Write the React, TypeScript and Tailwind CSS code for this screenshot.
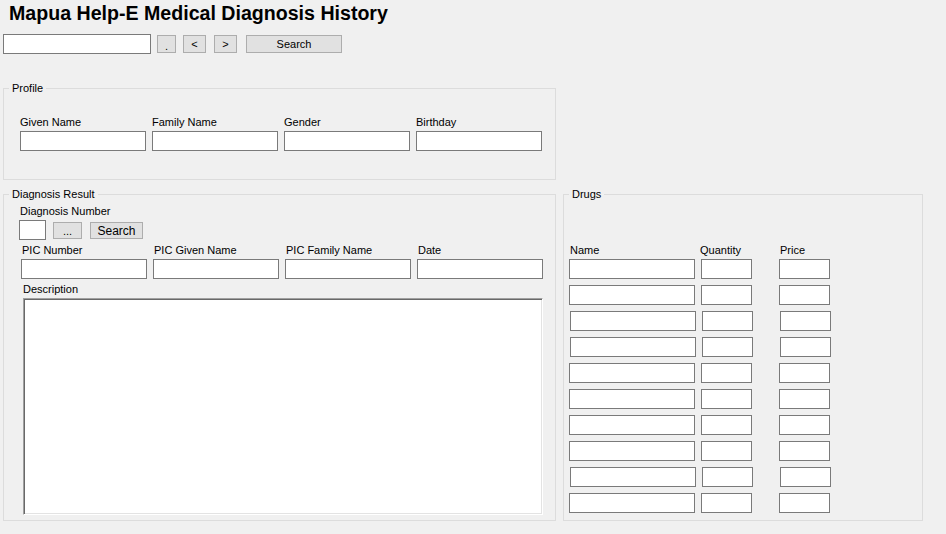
import React from "react";

const Box = ({ className = "" }: { className?: string }) => (
  <input className={`block h-5 border border-[#7a7a7a] bg-white outline-none ${className}`} />
);

const Btn = ({ label, className = "" }: { label: string; className?: string }) => (
  <button className={`block border border-[#adadad] bg-[#e1e1e1] text-[11px] leading-none text-black ${className}`}>
    {label}
  </button>
);

const profileFields = ["Given Name", "Family Name", "Gender", "Birthday"];
const picFields = ["PIC Number", "PIC Given Name", "PIC Family Name", "Date"];
// a few of the drug rows sit 1px to the right in the original form
const drugRows = [0, 0, 1, 1, 0, 0, 0, 0, 1, 0];

export default function App() {
  return (
    <div className="min-h-screen w-full bg-[#f0f0f0] text-[11px] text-black font-['Liberation_Sans',Arial,sans-serif]">
      <h1 className="pl-[9px] pt-[2px] text-[19.6px] font-bold leading-[22px]">
        Mapua Help-E Medical Diagnosis History
      </h1>

      <div className="mt-[10px] flex items-start pl-[3px]">
        <Box className="w-[148px]" />
        <Btn label="." className="ml-[6px] mt-px h-[18px] w-[19px] pt-[4px]" />
        <Btn label="<" className="ml-[7px] mt-px h-[18px] w-[23px]" />
        <Btn label=">" className="ml-[8px] mt-px h-[18px] w-[23px]" />
        <Btn label="Search" className="ml-[9px] mt-px h-[18px] w-[96px]" />
      </div>

      <fieldset className="mt-[28px] ml-[3px] w-[553px] border border-[#dcdcdc] pb-[28px]">
        <legend className="ml-[5px] px-[3px] leading-[12px]">Profile</legend>
        <div className="flex gap-[6px] pl-[16px] pt-[22px]">
          {profileFields.map((f) => (
            <div key={f}>
              <div className="leading-[13px]">{f}</div>
              <Box className="mt-[2px] w-[126px]" />
            </div>
          ))}
        </div>
      </fieldset>

      <div className="mt-[8px] flex items-stretch">
        <fieldset className="ml-[3px] w-[553px] border border-[#dcdcdc] pb-[5px]">
          <legend className="ml-[5px] px-[3px] leading-[12px]">Diagnosis Result</legend>
          <div className="pl-[15px]">
            <div className="pt-[5px] pl-px leading-[13px]">Diagnosis Number</div>
            <div className="mt-[2px] flex items-start">
              <Box className="w-[27px]" />
              <Btn label="..." className="ml-[7px] mt-[2px] h-[17px] w-[29px] pt-[2px]" />
              <Btn label="Search" className="ml-[8px] mt-[2px] h-[17px] w-[53px] text-[12px]" />
            </div>
            <div className="ml-[2px] mt-[4px] flex gap-[6px]">
              {picFields.map((f) => (
                <div key={f}>
                  <div className="pl-px leading-[13px]">{f}</div>
                  <Box className="mt-[2px] w-[126px]" />
                </div>
              ))}
            </div>
            <div className="ml-[4px] mt-[4px] leading-[13px]">Description</div>
            <textarea className="ml-[4px] mt-[2px] block h-[217px] w-[520px] resize-none border border-t-[#a0a0a0] border-l-[#a0a0a0] border-b-white border-r-white bg-white shadow-[inset_1px_1px_0_#696969,inset_-1px_-1px_0_#e3e3e3] outline-none" />
          </div>
        </fieldset>

        <fieldset className="ml-[7px] w-[360px] border border-[#dcdcdc]">
          <legend className="ml-[5px] px-[3px] leading-[12px]">Drugs</legend>
          <div className="pl-[5px]">
            <div className="flex pt-[44px] leading-[13px]">
              <span className="ml-px w-[130px]">Name</span>
              <span className="w-[80px]">Quantity</span>
              <span>Price</span>
            </div>
            <div className="mt-[2px] flex flex-col gap-[6px]">
              {drugRows.map((shift, i) => (
                <div key={i} className={`flex ${shift ? "ml-px" : ""}`}>
                  <Box className="w-[126px]" />
                  <Box className="ml-[6px] w-[51px]" />
                  <Box className="ml-[27px] w-[51px]" />
                </div>
              ))}
            </div>
          </div>
        </fieldset>
      </div>
    </div>
  );
}
